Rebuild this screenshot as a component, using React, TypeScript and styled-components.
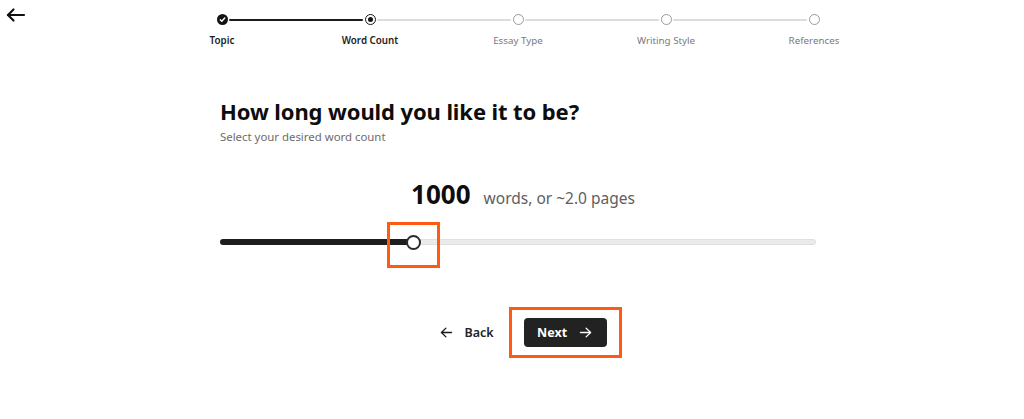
import React from "react";
import styled, { createGlobalStyle } from "styled-components";

const GlobalStyle = createGlobalStyle`
  html, body { margin: 0; padding: 0; background: #ffffff; }
  body { font-family: "Noto Sans", "Open Sans", sans-serif; color: #111; }
  * { box-sizing: border-box; }
`;

const Page = styled.div`
  width: 1024px;
  min-height: 419px;
  background: #fff;
`;

const Header = styled.header`
  display: grid;
  grid-template-columns: 148px 740px 1fr;
  height: 48px;
`;

const BackIconButton = styled.button`
  align-self: start;
  justify-self: start;
  margin: 6px 0 0 5px;
  padding: 0;
  border: 0;
  background: none;
  width: 22px;
  height: 18px;
  display: flex;
  cursor: pointer;
`;

const StepList = styled.ol`
  list-style: none;
  margin: 0;
  padding: 14px 0 0;
  display: grid;
  grid-template-columns: repeat(5, 148px);
`;

const Step = styled.li<{ $line?: "done" | "todo" }>`
  position: relative;
  display: flex;
  flex-direction: column;
  align-items: center;

  &::after {
    content: ${(p) => (p.$line ? '""' : "none")};
    position: absolute;
    top: ${(p) => (p.$line === "done" ? 4.5 : 5)}px;
    left: calc(50% + 7px);
    width: calc(100% - 14px);
    height: ${(p) => (p.$line === "done" ? 2.5 : 1.5)}px;
    background: ${(p) => (p.$line === "done" ? "#1c1c1c" : "#dcdcdc")};
    border-radius: 2px;
  }
`;

const Dot = styled.span<{ $state: "done" | "current" | "todo" }>`
  width: 11px;
  height: 11px;
  border-radius: 50%;
  display: flex;
  align-items: center;
  justify-content: center;
  background: ${(p) => (p.$state === "done" ? "#141414" : "#fff")};
  border: ${(p) =>
    p.$state === "done"
      ? "none"
      : p.$state === "current"
      ? "1.5px solid #141414"
      : "1px solid #9a9a9a"};
`;

const InnerDot = styled.span`
  width: 5px;
  height: 5px;
  border-radius: 50%;
  background: #141414;
`;

const StepLabel = styled.span<{ $active: boolean }>`
  margin-top: 9px;
  font-size: 9.8px;
  line-height: 14px;
  white-space: nowrap;
  font-weight: ${(p) => (p.$active ? 600 : 400)};
  color: ${(p) => (p.$active ? "#1e1e1e" : "#7a7a7a")};
`;

const Main = styled.main`
  margin-left: 220px;
  width: 596px;
  display: flex;
  flex-direction: column;
`;

const Title = styled.h1`
  margin: 49px 0 0;
  font-size: 22px;
  line-height: 28px;
  font-weight: 700;
  color: #0d0d0d;
  letter-spacing: -0.1px;
`;

const Subtitle = styled.p`
  margin: 4px 0 0;
  font-size: 11.4px;
  line-height: 16px;
  color: #6c6c6c;
`;

const CountRow = styled.div`
  margin-top: 33px;
  padding-left: 10px;
  display: flex;
  justify-content: center;
  align-items: baseline;
  gap: 13px;
  height: 32px;
`;

const CountValue = styled.span`
  font-size: 26px;
  line-height: 32px;
  font-weight: 700;
  color: #0d0d0d;
`;

const CountUnit = styled.span`
  font-size: 15.5px;
  color: #5e5e5e;
`;

const SliderArea = styled.div`
  margin-top: 22px;
  height: 20px;
  position: relative;
  display: flex;
  align-items: center;
`;

const Track = styled.div`
  position: relative;
  width: 100%;
  height: 6px;
  border-radius: 3px;
  background: #ebebeb;
  border: 1px solid #e0e0e0;
`;

const Fill = styled.div`
  position: absolute;
  left: -1px;
  top: -1px;
  bottom: -1px;
  background: #1e1e1e;
  border-radius: 3px 0 0 3px;
`;

const Thumb = styled.div`
  position: absolute;
  top: 50%;
  width: 15px;
  height: 15px;
  margin: -7.5px 0 0 -7.5px;
  border-radius: 50%;
  background: #fff;
  border: 2px solid #2a2a2a;
`;

const Highlight = styled.span<{ $inset: string }>`
  position: absolute;
  inset: ${(p) => p.$inset};
  border: 3px solid #ff5a14;
  pointer-events: none;
`;

const ButtonRow = styled.div`
  margin-top: 66px;
  padding-left: 10px;
  display: flex;
  justify-content: center;
  align-items: center;
  gap: 30px;
`;

const GhostButton = styled.button`
  display: flex;
  align-items: center;
  gap: 10px;
  border: 0;
  background: none;
  padding: 0;
  font-family: inherit;
  font-size: 12.5px;
  font-weight: 600;
  color: #222;
  cursor: pointer;
`;

const PrimaryWrap = styled.div`
  position: relative;
`;

const PrimaryButton = styled.button`
  display: flex;
  align-items: center;
  justify-content: center;
  gap: 11px;
  width: 83px;
  height: 29px;
  border: 0;
  border-radius: 4px;
  background: #222222;
  color: #fff;
  font-family: inherit;
  font-size: 12.5px;
  font-weight: 700;
  cursor: pointer;
`;

const Arrow = ({ dir, size, stroke, color }: { dir: "left" | "right"; size: number; stroke: number; color: string }) => (
  <svg width={size} height={size} viewBox="0 0 24 24" fill="none" stroke={color} strokeWidth={stroke} strokeLinecap="round" strokeLinejoin="round">
    {dir === "left" ? (
      <>
        <path d="M20 12H4" />
        <path d="M11 5l-7 7 7 7" />
      </>
    ) : (
      <>
        <path d="M4 12h16" />
        <path d="M13 5l7 7-7 7" />
      </>
    )}
  </svg>
);

const Check = () => (
  <svg width="7" height="7" viewBox="0 0 10 10" fill="none" stroke="#fff" strokeWidth="2" strokeLinecap="round" strokeLinejoin="round">
    <path d="M1.8 5.2l2.2 2.2 4.2-4.6" />
  </svg>
);

type StepState = "done" | "current" | "todo";
const steps: { label: string; state: StepState }[] = [
  { label: "Topic", state: "done" },
  { label: "Word Count", state: "current" },
  { label: "Essay Type", state: "todo" },
  { label: "Writing Style", state: "todo" },
  { label: "References", state: "todo" },
];

const MIN = 100;
const MAX = 2880;
const VALUE = 1000;

export default function App() {
  const pct = ((VALUE - MIN) / (MAX - MIN)) * 100;
  return (
    <>
      <GlobalStyle />
      <Page>
        <Header>
          <BackIconButton aria-label="Go back">
            <svg width="22" height="18" viewBox="0 0 22 18" fill="none" stroke="#111" strokeWidth="2.2" strokeLinecap="round" strokeLinejoin="round">
              <path d="M19 9H3" />
              <path d="M8.5 3.5L3 9l5.5 5.5" />
            </svg>
          </BackIconButton>
          <StepList>
            {steps.map((s, i) => {
              const next = steps[i + 1];
              const line = next ? (next.state === "todo" ? "todo" : "done") : undefined;
              return (
                <Step key={s.label} $line={line}>
                  <Dot $state={s.state}>
                    {s.state === "done" && <Check />}
                    {s.state === "current" && <InnerDot />}
                  </Dot>
                  <StepLabel $active={s.state !== "todo"}>{s.label}</StepLabel>
                </Step>
              );
            })}
          </StepList>
        </Header>
        <Main>
          <Title>How long would you like it to be?</Title>
          <Subtitle>Select your desired word count</Subtitle>
          <CountRow>
            <CountValue>{VALUE}</CountValue>
            <CountUnit>words, or ~2.0 pages</CountUnit>
          </CountRow>
          <SliderArea>
            <Track>
              <Fill style={{ width: `${pct}%` }} />
              <Thumb style={{ left: `${pct}%` }}>
                <Highlight $inset="-15px -21px -20px -21px" />
              </Thumb>
            </Track>
          </SliderArea>
          <ButtonRow>
            <GhostButton>
              <Arrow dir="left" size={15} stroke={2.2} color="#1a1a1a" />
              Back
            </GhostButton>
            <PrimaryWrap>
              <PrimaryButton>
                Next
                <Arrow dir="right" size={15} stroke={2.2} color="#fff" />
              </PrimaryButton>
              <Highlight $inset="-11px -15px" />
            </PrimaryWrap>
          </ButtonRow>
        </Main>
      </Page>
    </>
  );
}
